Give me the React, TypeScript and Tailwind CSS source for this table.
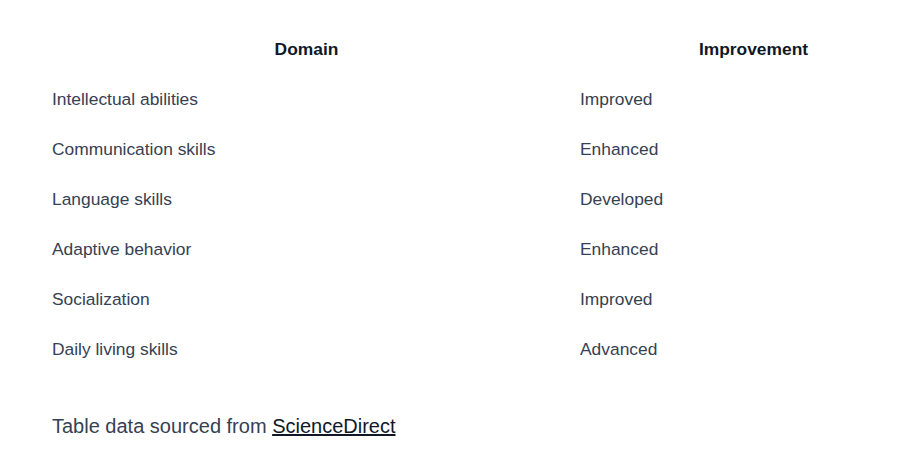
import React from "react";

const rows = [
  ["Intellectual abilities", "Improved"],
  ["Communication skills", "Enhanced"],
  ["Language skills", "Developed"],
  ["Adaptive behavior", "Enhanced"],
  ["Socialization", "Improved"],
  ["Daily living skills", "Advanced"],
];

const App = () => {
  return (
    <div className="w-[908px] h-[463px] overflow-hidden bg-white font-['Liberation_Sans',Arial,sans-serif]">
      <div className="pl-[40px] pt-[24px]">
        <table className="border-collapse table-fixed w-[898px]">
          <thead>
            <tr className="h-[50px]">
              <th className="w-[528px] pl-[17px] pr-3 text-center text-[17.4px] font-bold text-gray-900">Domain</th>
              <th className="w-[370px] pl-[13px] pr-3 text-center text-[17.4px] font-bold text-gray-900">Improvement</th>
            </tr>
          </thead>
          <tbody>
            {rows.map(([domain, improvement]) => (
              <tr key={domain} className="h-[50px]">
                <td className="px-3 text-left text-[17.4px] text-gray-700">{domain}</td>
                <td className="px-3 text-left text-[17.4px] text-gray-700">{improvement}</td>
              </tr>
            ))}
          </tbody>
        </table>
        <p className="mt-[38px] pl-3 text-xl text-gray-700">
          Table data sourced from{" "}
          <a href="#" className="text-gray-900 underline">
            ScienceDirect
          </a>
        </p>
      </div>
    </div>
  );
};

export default App;
